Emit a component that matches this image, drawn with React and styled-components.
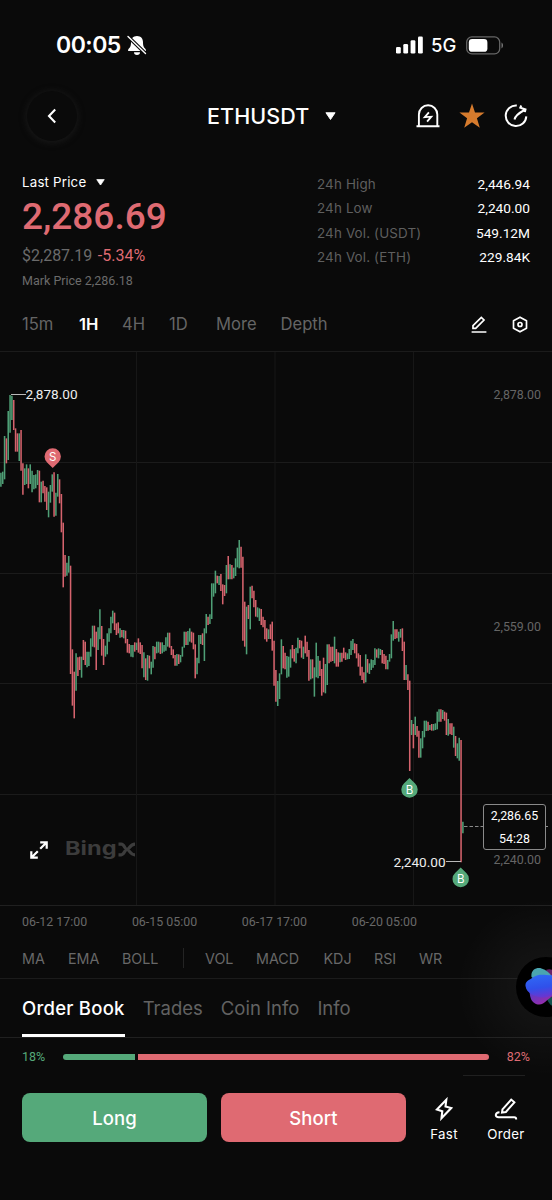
import React from "react";
import styled, { createGlobalStyle } from "styled-components";

const GREEN = "#55a97a";
const RED = "#df6a72";

// hourly bars, "colour top-bottom", in thirds of a pixel below the base line
const SERIES = [
  {
    base: -2,
    bars: `g368-410 g365-402 g258-388 r265-340 g183-330 g135-248 g137-210 r150-240 r235-305 r250-305
    g250-333 r240-362 r340-434 g355-405 g343-402 r355-415 g343-402 g362-427 g375-418 g373-415
    g360-405 r362-457 g395-457 r392-430 r408-455 r412-480 g425-502 g405-458 g373-425 r367-500
    g428-497 g372-440 r388-460 r432-547 r518-712 r615-680 g638-677 g618-668 r647-972 r898-1067
    r965-1105 g910-1022 r922-978 r920-960 g920-983 r870-930 r875-945 g905-952 g905-948 g865-920
    g827-890 r827-892 r845-960 g832-900 g778-868 r828-917 r867-945 g887-920 g850-913 g835-875
    g800-850 g782-820 r788-840 r820-855 r817-850 g835-863 r840-862 g840-865 r842-880 r867-908
    r882-910 g885-920 g885-922 r877-905 g878-900 r865-908`,
  },
  {
    base: 168,
    bars: `r367-402 r375-445 g397-472 r415-480 g405-482 r407-445 g425-463 g378-443 r380-418 g365-400
    g365-398 r367-402 g367-400 g375-395 g352-392 g338-380 r338-383 r378-405 r388-415 r405-437
    g402-437 r403-432 g405-427 g380-410 g335-383 r335-375 g333-375 g325-365 r335-368 r338-388
    r373-475 g413-463 g345-430 g345-372 r340-375 g325-423 g282-340 r290-315 g283-312 g190-297
    g190-230 g152-220 r167-190 g168-195 r162-213 r193-253 r195-228 g135-220 r108-178 g133-178
    r135-178 g143-175 g115-168 g83-142 g60-145 r80-143 r110-362 r245-380 g260-403 r255-297
    g200-328 r197-235 r212-262 r240-290 g262-292 g265-303 r267-315 r290-322 r300-358 r325-365
    g328-357 r313-357 r305-392 r362-497 r450-545 g483-558 g460-537 g358-463 r378-445 r398-448
    g408-473 g410-470 g388-443 r375-415 r387-425 g383-430 g353-400 r360-385 r362-413 g380-417
    r347-400 r365-410 r390-482 g418-478 r418-475 g442-530 g368-472 g408-475 r422-468 r447-527
    r413-517 g432-520 g373-495 r373-430 r380-425 r380-423 g350-430 r387-440 r397-440 g398-427
    r398-425 r383-415 r397-420 g400-418 g387-417 g362-405 g357-390 r370-400 r372-415 r400-440
    r405-467 r440-480 r457-490 g403-487 r417-458 g430-462 g418-450 g420-443 g385-435 r388-413
    g385-415 g387-405 r390-430 r402-432 r407-448 g420-448 g402-425 g343-415 g303-362 r328-357
    r328-355 g335-365 g327-353 r325-393 r365-480 g435-480 r463-510`,
  },
  {
    base: 248,
    bars: `r242-513 g360-405 r372-445 g350-405 r378-410 r392-473 g415-473 g393-445 g362-412 g362-393
    r365-392 g375-390 r372-392 g372-392 g370-390 g335-388 g328-365 r328-365 g330-357 r335-362
    r338-405 g357-407 r370-403 r370-405 g380-443 r408-468 g430-475 g413-482 r420-787 g665-700`,
  },
];

const bars = SERIES.flatMap(({ base, bars }) =>
  bars.split(/\s+/).map((bar) => {
    const [top, bottom] = bar.slice(1).split("-").map(Number);
    return { up: bar[0] === "g", y1: base + top / 3, y2: base + bottom / 3 };
  })
);

const stats = [
  ["24h High", "2,446.94"],
  ["24h Low", "2,240.00"],
  ["24h Vol. (USDT)", "549.12M"],
  ["24h Vol. (ETH)", "229.84K"],
];
const frames = ["15m", "1H", "4H", "1D", "More", "Depth"];
const dates = ["06-12 17:00", "06-15 05:00", "06-17 17:00", "06-20 05:00"];
const tabs = ["Order Book", "Trades", "Coin Info", "Info"];

export default function App() {
  return (
    <Screen>
      <GlobalStyle />
      <StatusBar>
        <Clock>00:05</Clock>
        <BellOff />
        <Spacer />
        <Signal />
        <Network>5G</Network>
        <Battery />
      </StatusBar>

      <Header>
        <BackButton>
          <svg width="10" height="16" viewBox="0 0 10 16">
            <path d="M8.2 1.6 2 8l6.2 6.4" fill="none" stroke="#fff" strokeWidth="2.1" />
          </svg>
        </BackButton>
        <Pair>
          ETHUSDT
          <Caret size={11} />
        </Pair>
        <HeaderIcons>
          <AlertIcon />
          <StarIcon />
          <GaugeIcon />
        </HeaderIcons>
      </Header>

      <Summary>
        <div>
          <PriceLabel>
            Last Price
            <Caret size={9} />
          </PriceLabel>
          <Price>2,286.69</Price>
          <Change>
            $2,287.19 <em>-5.34%</em>
          </Change>
          <Mark>Mark Price 2,286.18</Mark>
        </div>
        <Stats>
          {stats.map(([label, value]) => (
            <Stat key={label}>
              <span>{label}</span>
              <b>{value}</b>
            </Stat>
          ))}
        </Stats>
      </Summary>

      <Frames>
        {frames.map((frame) => (
          <Frame key={frame} $active={frame === "1H"}>
            {frame}
          </Frame>
        ))}
        <PenIcon />
        <HexIcon />
      </Frames>

      <ChartPanel>
        <Chart />
        <Watermark>
          <ExpandIcon />
          <Brand>Bing</Brand>
          <BrandX />
        </Watermark>
        <PriceTag>
          <span>2,286.65</span>
          <span>54:28</span>
        </PriceTag>
      </ChartPanel>

      <Dates>
        {dates.map((date) => (
          <span key={date}>{date}</span>
        ))}
      </Dates>

      <Indicators>
        <span>MA</span>
        <span>EMA</span>
        <span>BOLL</span>
        <Divider />
        <span>VOL</span>
        <span>MACD</span>
        <span>KDJ</span>
        <span>RSI</span>
        <span>WR</span>
      </Indicators>

      <Tabs>
        {tabs.map((tab) => (
          <Tab key={tab} $active={tab === "Order Book"}>
            {tab}
          </Tab>
        ))}
      </Tabs>

      <Ratio>
        <Percent $color={GREEN}>18%</Percent>
        <Bar>
          <Fill $color={GREEN} $grow={72} $radius="3px 0 0 3px" />
          <Fill $color={RED} $grow={351} $radius="0 3px 3px 0" />
        </Bar>
        <Percent $color={RED}>82%</Percent>
      </Ratio>
      <Peek />

      <Actions>
        <TradeButton $color={GREEN}>Long</TradeButton>
        <TradeButton $color={RED}>Short</TradeButton>
        <Shortcut $width={76}>
          <BoltIcon />
          Fast
        </Shortcut>
        <Shortcut $width={48}>
          <OrderIcon />
          Order
        </Shortcut>
      </Actions>

      <AssistantGlow />
      <Assistant>
        <Blob />
      </Assistant>
    </Screen>
  );
}

function Chart() {
  return (
    <svg width="552" height="554" viewBox="0 0 552 554">
      <g stroke="#1b1b1b">
        {[110.5, 221.5, 331.5, 442.5].map((y) => (
          <path key={y} d={`M0 ${y}H552`} />
        ))}
        {[136.5, 275, 413.5].map((x) => (
          <path key={x} d={`M${x} 0V553`} stroke="#171717" />
        ))}
      </g>
      {bars.map((bar, i) => (
        <line
          key={i}
          x1={0.9 + i * 1.8333}
          x2={0.9 + i * 1.8333}
          y1={bar.y1}
          y2={bar.y2}
          stroke={bar.up ? "#4f9f76" : "#d5636d"}
          strokeWidth="1.55"
        />
      ))}
      <path d="M11 42.5H26M446 509.5H461" stroke="#b9b9b9" strokeWidth="1.2" />
      <path d="M464 474.5H484M546 474.5H548" stroke="#8a8a8a" strokeDasharray="3.5 2" />
      <g fontFamily="Roboto, sans-serif" fontSize="13.6">
        <text x="25.5" y="47" fill="#eee">2,878.00</text>
        <text x="393.5" y="514.5" fill="#eee">2,240.00</text>
        <g fill="#656565" fontSize="12.4" textAnchor="end">
          <text x="541" y="46.5">2,878.00</text>
          <text x="541" y="279">2,559.00</text>
          <text x="541" y="512">2,240.00</text>
        </g>
      </g>
      <Pin x={52.7} y={104.5} color={RED} letter="S" />
      <Pin x={409.5} y={437.5} color={GREEN} letter="B" up />
      <Pin x={460.7} y={527} color={GREEN} letter="B" up />
    </svg>
  );
}

function Pin({ x, y, color, letter, up }) {
  return (
    <g transform={`translate(${x} ${y})`}>
      <path
        d="M-5.6 5.9A8.2 8.2 0 1 1 5.6 5.9L0 11.6Z"
        fill={color}
        transform={up ? "rotate(180)" : undefined}
      />
      <text y="4.2" fill="#fff" fontFamily="Inter, sans-serif" fontSize="11.5" textAnchor="middle">
        {letter}
      </text>
    </g>
  );
}

function Caret({ size }) {
  return (
    <svg width={size} height={size * 0.75} viewBox="0 0 12 9">
      <path d="M1 .8h10L6 8.2Z" fill="#fff" stroke="#fff" strokeLinejoin="round" />
    </svg>
  );
}

function BellOff() {
  return (
    <svg width="20" height="21" viewBox="0 0 20 21">
      <path
        d="M10 1C6 1 4 3.8 4 7.6c0 4-1.2 5.2-2.6 6.600-.8.9-.4 1.800.7 1.800h15.800c1.100 0 1.500-.9.7-1.800-1.400-1.400-2.600-2.600-2.600-6.600C16 3.800 14 1 10 1ZM7 17.300a3 2.700 0 0 0 6 0Z"
        fill="#fff"
      />
      <path d="m1 1.5 17.5 17" stroke="#0a0a0a" strokeWidth="3.6" />
      <path d="m1 1.5 17.5 17" stroke="#fff" strokeWidth="1.4" strokeLinecap="round" />
    </svg>
  );
}

function Signal() {
  return (
    <svg width="27" height="18" viewBox="0 0 27 18" fill="#fff">
      <rect x="0" y="11" width="4.8" height="6.5" rx="1.3" />
      <rect x="7.3" y="8" width="4.8" height="9.5" rx="1.3" />
      <rect x="14.6" y="4.3" width="4.8" height="13.2" rx="1.3" />
      <rect x="22" y=".5" width="4.8" height="17" rx="1.3" />
    </svg>
  );
}

function Battery() {
  return (
    <svg width="38" height="19" viewBox="0 0 38 19">
      <rect x=".7" y=".9" width="33" height="17" rx="5.2" fill="none" stroke="#666" strokeWidth="1.3" />
      <rect x="2.8" y="3" width="18.6" height="12.8" rx="3.4" fill="#fff" />
      <path d="M35.5 6.6c2 .8 2 5 0 5.8Z" fill="#777" />
    </svg>
  );
}

function AlertIcon() {
  return (
    <svg width="24" height="24" viewBox="0 0 24 24" fill="none" stroke="#fff" strokeWidth="1.9">
      <path d="M.5 22.3h23M2.9 22V10.500a9.200 9.200 0 0 1 18.400 0V22" />
      <path d="m12.900 8.300-4.200 4.900 6.600-.5-4.200 5" strokeWidth="1.8" />
    </svg>
  );
}

function StarIcon() {
  return (
    <svg width="26" height="26" viewBox="0 0 26 26">
      <path d="m13 .6 3 8.8 9.600.2-7.700 5.700 2.900 9.500-7.800-5.600-7.800 5.600 2.900-9.500L.4 9.600l9.600-.2Z" fill="#d67b2d" />
    </svg>
  );
}

function GaugeIcon() {
  return (
    <svg width="24" height="24" viewBox="0 0 24 24" fill="none" stroke="#fff" strokeWidth="2">
      <path d="M12.8 1.5A10.300 10.300 0 1 0 22.300 12.400M10.500 15.500c.8-3.500 3.500-6 10-9.500M17.300 1.500l-1 2.200 5.200 1.800-.6 2.600" />
    </svg>
  );
}

function PenIcon() {
  return (
    <svg width="16" height="17" viewBox="0 0 16 17" fill="none" stroke="#fff" strokeWidth="1.7">
      <path d="M.6 16h14.800M2 12.300V9.600L10.300 1.400l2.700 2.600-8.300 8.300Z" />
    </svg>
  );
}

function HexIcon() {
  return (
    <svg width="16" height="17" viewBox="0 0 16 17" fill="none" stroke="#fff" strokeWidth="1.7">
      <path d="m8 1.200 6.500 3.600v7.400L8 15.800l-6.500-3.600V4.800Z" strokeLinejoin="round" />
      <circle cx="8" cy="8.5" r="2" />
    </svg>
  );
}

function ExpandIcon() {
  return (
    <svg width="18" height="18" viewBox="0 0 18 18" fill="none" stroke="#fff" strokeWidth="2.2">
      <path d="M10.200 1.300h6.500v6.500M16.500 1.500l-6.300 6.300M7.800 16.700H1.300v-6.500M1.500 16.500l6.300-6.300" />
    </svg>
  );
}

function BrandX() {
  return (
    <svg width="17" height="15" viewBox="0 0 17 15" fill="none" stroke="#3c3c3c" strokeWidth="3.2">
      <path d="M.5 2.200h2.800C6.500 2.200 6.500 7.400 9 7.400S11.800 2.200 17 2.200M.5 12.800h2.800C6.500 12.800 6.500 7.400 9 7.400s2.800 5.400 8 5.400" />
    </svg>
  );
}

function BoltIcon() {
  return (
    <svg width="18" height="24" viewBox="0 0 18 24" fill="none" stroke="#fff" strokeWidth="2.1">
      <path d="M11.300 2.800 1.900 12.500l5.400 1.700-.8 7L16.200 11l-5.700-1.500Z" />
    </svg>
  );
}

function OrderIcon() {
  return (
    <svg width="24" height="24" viewBox="0 0 24 24" fill="none" stroke="#fff" strokeWidth="2">
      <path d="M8.500 12.300 17.200 2.600l3.200 2.700-8.500 9.700-3.900.6Z" />
      <path d="M5.500 15.300c-4.500.2-5 4.900-.8 4.900h15.500c1.500 0 2 .8 2 2.300" />
    </svg>
  );
}

function Blob() {
  return (
    <svg width="60" height="60" viewBox="0 0 60 60">
      <defs>
        <linearGradient id="wave" x1=".2" y1="0" x2=".4" y2="1">
          <stop offset="0" stopColor="#2f6af5" />
          <stop offset=".6" stopColor="#3050ea" />
          <stop offset="1" stopColor="#6a35d0" />
        </linearGradient>
        <linearGradient id="petal" x1="0" y1="0" x2=".6" y2="1">
          <stop offset="0" stopColor="#3a43d8" />
          <stop offset="1" stopColor="#9a2ba8" />
        </linearGradient>
      </defs>
      <path d="M30 13c4-2 8 0 10 3v14Z" fill="#672268" />
      <path d="M31 42l9-4v12c-4 0-7-3-9-8Z" fill="#12524f" />
      <path d="M15.500 20c-1-7 5-10 10-8.500 5 1.300 9 5 11 9.500l-12 6Z" fill="#4aa5b0" />
      <path d="M13 32c1 4 .5 6 2 10 2 5 8 7 12 4.500 4-2.500 8-8 13-8.500V28Z" fill="url(#petal)" />
      <path d="M9.500 29c-.5-5 4-6 8-9 4-2.500 8-2.500 13-2 4 .3 7 0 10 1v18c-6 .5-8 4-14 3.500-7-.5-16-4-17-11.500Z" fill="url(#wave)" />
    </svg>
  );
}

const GlobalStyle = createGlobalStyle`
  body {
    margin: 0;
    background: #0a0a0a;
  }
  * {
    box-sizing: border-box;
  }
  svg {
    display: block;
    flex: none;
  }
`;

const Screen = styled.main`
  position: relative;
  width: 552px;
  height: 1200px;
  overflow: hidden;
  background: #0a0a0a;
  color: #fff;
  font-family: Inter, sans-serif;
`;

const Spacer = styled.div`
  flex: 1;
`;

const StatusBar = styled.div`
  display: flex;
  align-items: center;
  height: 90px;
  padding: 0 48px 0 56px;
`;

const Clock = styled.span`
  width: 71px;
  font-size: 23px;
  font-weight: 600;
  letter-spacing: -0.5px;
`;

const Network = styled.span`
  width: 35px;
  margin-left: 8px;
  font-size: 18.5px;
  font-weight: 500;
`;

const Header = styled.header`
  display: grid;
  grid-template-columns: 180px 1fr 114px;
  align-items: center;
  height: 52px;
  padding: 0 23px 0 27px;
`;

const BackButton = styled.div`
  display: flex;
  align-items: center;
  justify-content: center;
  width: 50px;
  height: 50px;
  border-radius: 50%;
  background: #0a0a0a;
  box-shadow: 0 1px 6px 1px #181818;
`;

const Pair = styled.div`
  display: flex;
  align-items: center;
  gap: 16px;
  font-size: 21.5px;
  font-weight: 500;
  letter-spacing: 0.1px;
`;

const HeaderIcons = styled.div`
  display: flex;
  align-items: center;
  justify-content: space-between;
  margin: 0 1px;
`;

const Summary = styled.section`
  display: flex;
  justify-content: space-between;
  height: 156px;
  padding: 30px 22px 0;
`;

const PriceLabel = styled.div`
  display: flex;
  align-items: center;
  gap: 10px;
  height: 20px;
  font-size: 13.3px;
  letter-spacing: 0.2px;
`;

const Price = styled.div`
  height: 47px;
  color: ${RED};
  font: 500 37px/50px Roboto, sans-serif;
`;

const Change = styled.div`
  color: #6b6b6b;
  font: 16px/33px Roboto, sans-serif;
  em {
    margin-left: 1.5px;
    color: ${RED};
    font-style: normal;
  }
`;

const Mark = styled.div`
  color: #6b6b6b;
  font: 12.5px/18px Roboto, sans-serif;
`;

const Stats = styled.div`
  width: 213px;
`;

const Stat = styled.div`
  display: flex;
  justify-content: space-between;
  height: 24.3px;
  color: #5f5f5f;
  font-size: 13.4px;
  letter-spacing: 0.15px;
  line-height: 25.6px;
  b {
    color: #fff;
    font: 400 13.7px/25.6px Roboto, sans-serif;
    letter-spacing: 0;
  }
`;

const Frames = styled.nav`
  display: grid;
  grid-template-columns: 57px 43px 47px 47px 64.5px 190px 41.5px 16px;
  align-items: center;
  height: 54px;
  padding-left: 22px;
  border-bottom: 1px solid #1b1b1b;
`;

const Frame = styled.span`
  color: ${({ $active }) => ($active ? "#fff" : "#656565")};
  font-size: 16.6px;
  font-weight: ${({ $active }) => ($active ? 600 : 400)};
  line-height: 20px;
  padding-bottom: 1px;
`;

const ChartPanel = styled.section`
  position: relative;
  height: 554px;
  border-bottom: 1px solid #202020;
`;

const Watermark = styled.div`
  position: absolute;
  left: 29.5px;
  top: 484.5px;
  display: flex;
  align-items: center;
  height: 26px;
`;

const Brand = styled.span`
  width: 53.5px;
  margin-left: 17px;
  color: #3c3c3c;
  font-size: 19px;
  font-weight: 700;
  line-height: 22px;
  transform: translateY(-1px) scaleX(1.24);
  transform-origin: left;
`;

const PriceTag = styled.div`
  position: absolute;
  left: 483px;
  top: 452px;
  width: 63px;
  height: 46px;
  border: 1px solid #8a8a8a;
  border-radius: 3px;
  background: #0a0a0a;
  font: 12.4px/22.6px Roboto, sans-serif;
  text-align: center;
  span {
    display: block;
  }
`;

const Dates = styled.div`
  display: grid;
  grid-template-columns: repeat(4, 109.9px);
  height: 32px;
  padding-left: 22px;
  color: #686868;
  font: 12.4px/32px Roboto, sans-serif;
`;

const Indicators = styled.div`
  display: grid;
  grid-template-columns: 46px 54px 61px 22px 51px 67.5px 50.5px 45px 40px;
  align-items: center;
  height: 41px;
  padding-left: 22px;
  border-bottom: 1px solid #1b1b1b;
  color: #686868;
  font-size: 14.3px;
`;

const Divider = styled.i`
  width: 1px;
  height: 20px;
  background: #242424;
`;

const Tabs = styled.nav`
  display: flex;
  gap: 18px;
  height: 59px;
  padding-left: 22px;
  border-bottom: 1px solid #202020;
`;

const Tab = styled.span`
  height: 58px;
  border-bottom: 3px solid ${({ $active }) => ($active ? "#fff" : "transparent")};
  color: ${({ $active }) => ($active ? "#fff" : "#626262")};
  font-size: 18.5px;
  font-weight: ${({ $active }) => ($active ? 500 : 400)};
  letter-spacing: ${({ $active }) => ($active ? "0.25px" : "0")};
  line-height: 58px;
`;

const Ratio = styled.div`
  display: flex;
  align-items: center;
  justify-content: space-between;
  height: 37px;
  padding: 0 22px;
`;

const Percent = styled.span`
  color: ${({ $color }) => $color};
  font: 12.5px Roboto, sans-serif;
`;

const Bar = styled.div`
  display: flex;
  gap: 3px;
  width: 426px;
  height: 6px;
`;

const Fill = styled.div`
  flex: ${({ $grow }) => $grow};
  border-radius: ${({ $radius }) => $radius};
  background: ${({ $color }) => $color};
`;

const Peek = styled.div`
  width: 62px;
  height: 1px;
  margin-left: 463px;
  background: #202020;
`;

const Actions = styled.div`
  display: flex;
  height: 66px;
  padding: 17px 0 0 22px;
`;

const TradeButton = styled.div`
  width: 185px;
  height: 49px;
  margin-right: 14px;
  border-radius: 8px;
  background: ${({ $color }) => $color};
  font-size: 18.5px;
  font-weight: 500;
  letter-spacing: 0.1px;
  line-height: 50px;
  text-align: center;
  & + & {
    margin-right: 0;
  }
`;

const Shortcut = styled.div`
  display: flex;
  flex-direction: column;
  align-items: center;
  gap: 5px;
  width: ${({ $width }) => $width}px;
  padding-top: 4px;
  font-size: 13.3px;
  letter-spacing: 0.3px;
`;

const AssistantGlow = styled.div`
  position: absolute;
  left: 456px;
  top: 897px;
  width: 180px;
  height: 180px;
  background: radial-gradient(circle, rgba(255, 255, 255, 0.035) 25%, transparent 70%);
  pointer-events: none;
`;

const Assistant = styled.div`
  position: absolute;
  left: 516px;
  top: 957px;
  width: 60px;
  height: 60px;
  border-radius: 50%;
  background: #000;
`;
